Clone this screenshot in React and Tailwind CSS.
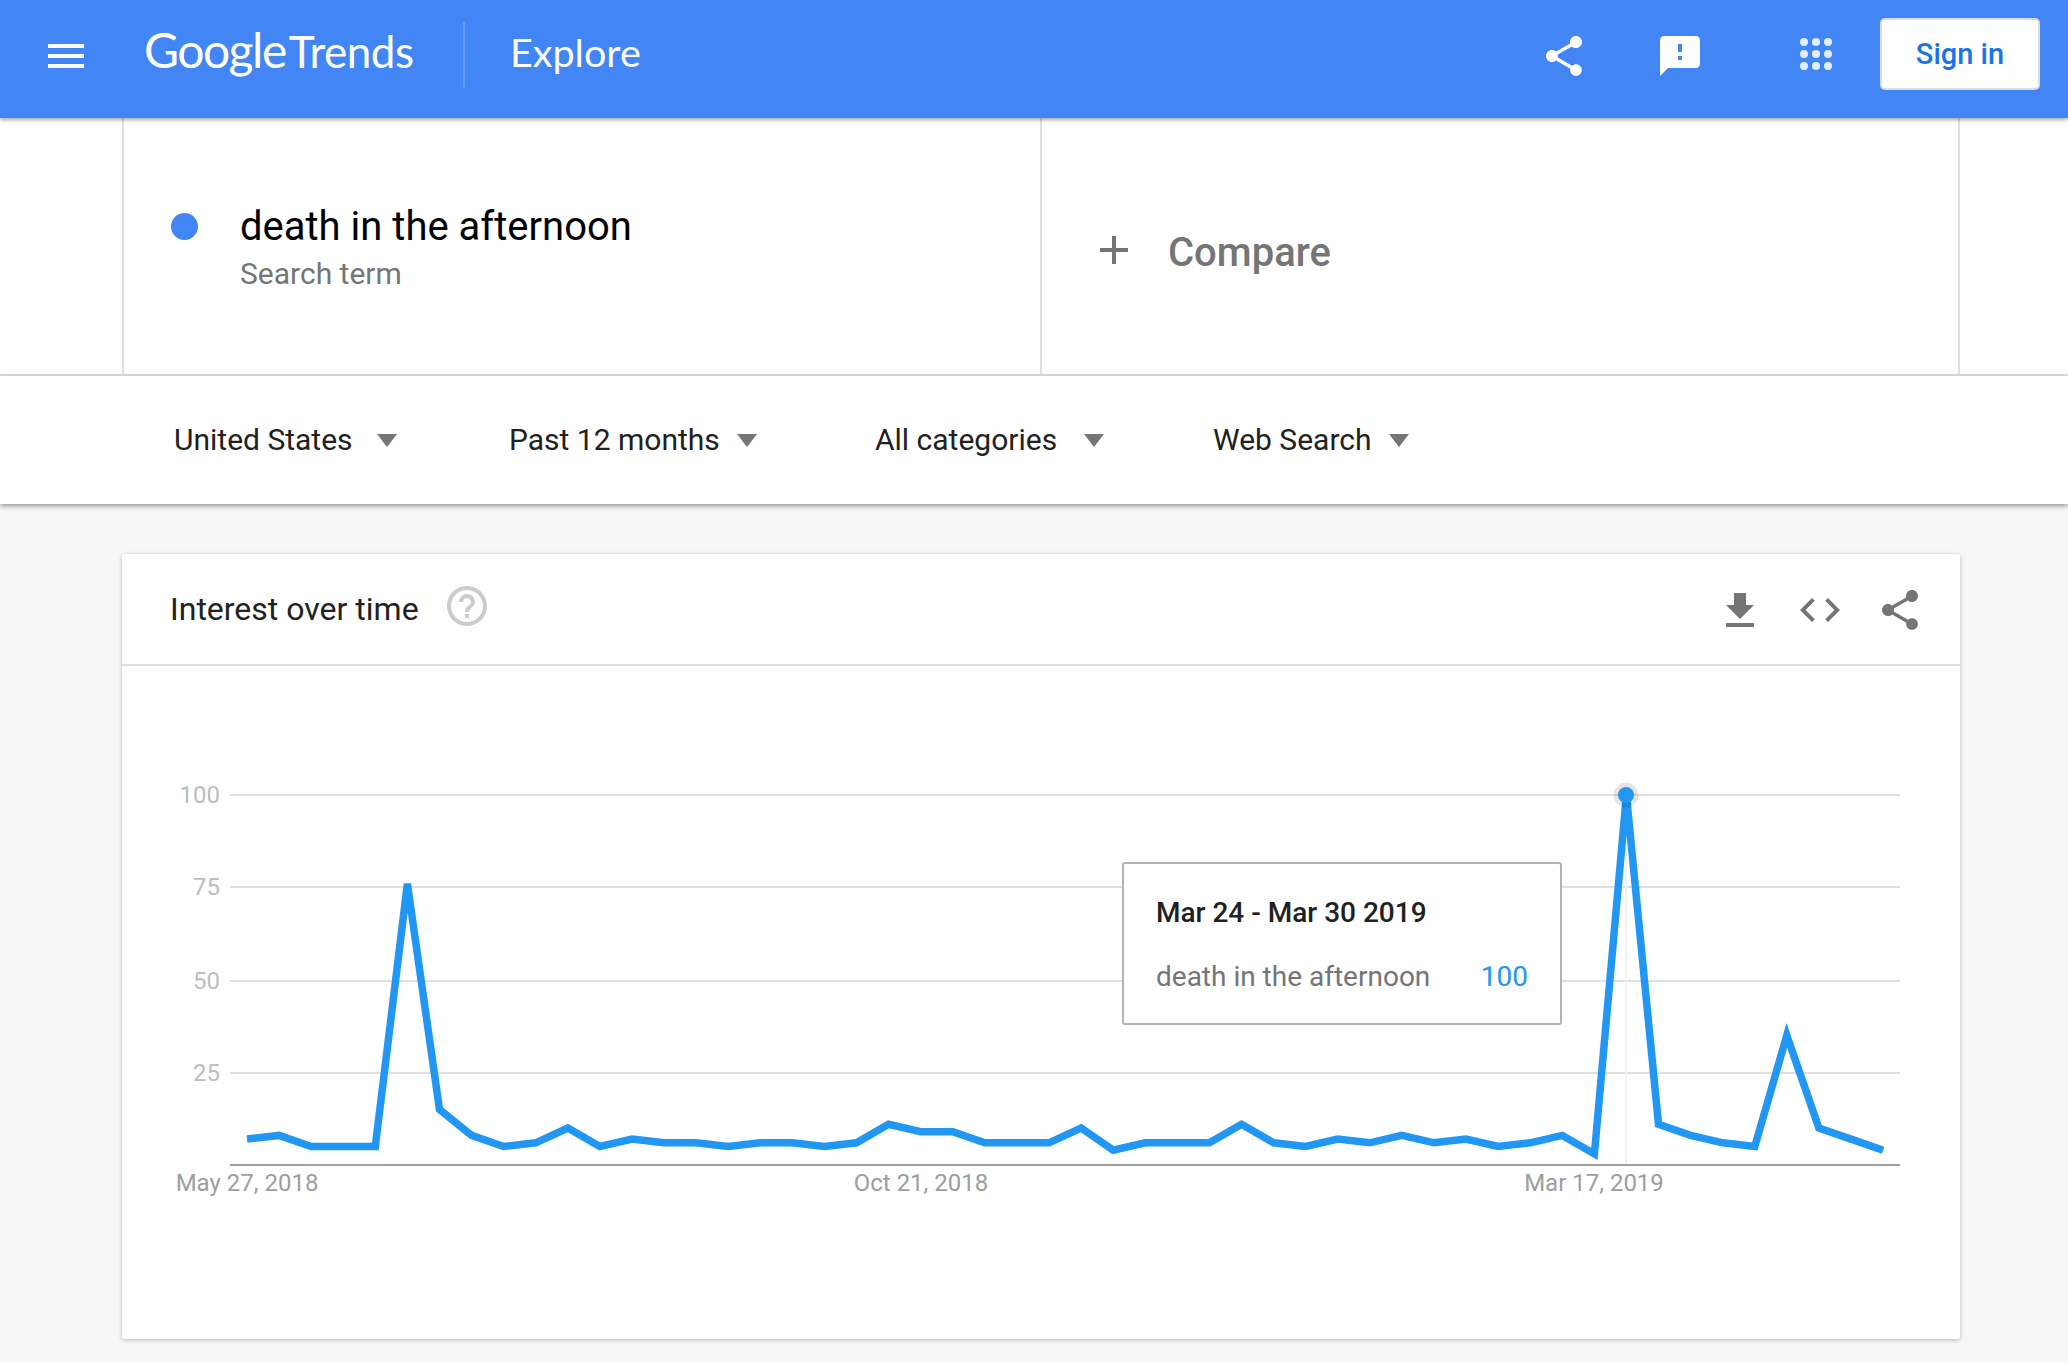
const values = [7, 8, 5, 5, 5, 76, 15, 8, 5, 6, 10, 5, 7, 6, 6, 5, 6, 6, 5, 6, 11, 9, 9, 6, 6, 6, 10, 4, 6, 6, 6, 11, 6, 5, 7, 6, 8, 6, 7, 5, 6, 8, 3, 100, 11, 8, 6, 5, 35, 10, 7, 4];
const points = values.map((v, i) => `${(247 + i * 32.08).toFixed(1)},${(1165 - v * 3.7).toFixed(1)}`).join(' ');

const filters = [
  { label: 'United States', box: 'w-[335px] gap-[24px]' },
  { label: 'Past 12 months', box: 'w-[366px] gap-[17px]' },
  { label: 'All categories', box: 'w-[338px] gap-[27px]' },
  { label: 'Web Search', box: 'gap-[17px]' },
];

const gridLines = [
  { y: 795, label: '100' },
  { y: 887, label: '75' },
  { y: 981, label: '50' },
  { y: 1073, label: '25' },
];

const dates = [
  { x: 247, label: 'May 27, 2018' },
  { x: 921, label: 'Oct 21, 2018' },
  { x: 1594, label: 'Mar 17, 2019' },
];

function Icon({ d, className }) {
  return (
    <svg viewBox="0 0 24 24" className={className} fill="currentColor">
      <path d={d} />
    </svg>
  );
}

const sharePath = 'M18 16.08c-.76 0-1.44.3-1.96.77L8.91 12.7c.05-.23.09-.46.09-.7s-.04-.47-.09-.7l7.05-4.11c.54.5 1.25.81 2.04.81 1.66 0 3-1.34 3-3s-1.34-3-3-3-3 1.34-3 3c0 .24.04.47.09.7L8.04 9.81C7.5 9.31 6.79 9 6 9c-1.66 0-3 1.34-3 3s1.34 3 3 3c.79 0 1.5-.31 2.04-.81l7.12 4.16c-.05.21-.08.43-.08.65 0 1.61 1.31 2.92 2.92 2.92 1.61 0 2.92-1.31 2.92-2.92s-1.31-2.92-2.92-2.92z';
const feedbackPath = 'M20 2H4c-1.1 0-1.99.9-1.99 2L2 22l4-4h14c1.1 0 2-.9 2-2V4c0-1.1-.9-2-2-2zm-7 12h-2v-2h2v2zm0-4h-2V6h2v4z';
const downloadPath = 'M19 9h-4V3H9v6H5l7 7 7-7zM5 18v2h14v-2H5z';
const codePath = 'M9.4 16.6L4.8 12l4.6-4.6L8 6l-6 6 6 6 1.4-1.4zm5.2 0l4.6-4.6-4.6-4.6L16 6l6 6-6 6-1.4-1.4z';
const helpPath = 'M11 18h2v-2h-2v2zm1-16C6.48 2 2 6.48 2 12s4.48 10 10 10 10-4.48 10-10S17.52 2 12 2zm0 18c-4.41 0-8-3.59-8-8s3.59-8 8-8 8 3.59 8 8-3.59 8-8 8zm0-14c-2.21 0-4 1.79-4 4h2c0-1.1.9-2 2-2s2 .9 2 2c0 2-3 1.75-3 5h2c0-2.25 3-2.5 3-5 0-2.21-1.79-4-4-4z';

function Header() {
  return (
    <header className="relative z-20 flex h-[118px] items-start bg-[#4285f4] text-white shadow-[0_2px_4px_rgba(0,0,0,0.35)]">
      <div className="ml-[48px] mt-[44px] flex w-[36px] flex-col gap-[6px]">
        <div className="h-[4px] bg-white" />
        <div className="h-[4px] bg-white" />
        <div className="h-[4px] bg-white" />
      </div>
      <div className="ml-[60px] mt-[24px] flex w-[269px] items-baseline whitespace-nowrap font-[Lato,sans-serif] leading-[52px]">
        <span className="text-[48px] font-normal tracking-[-1.5px]">Google</span>
        <span className="ml-[3px] text-[44px] font-normal tracking-[-0.5px]">Trends</span>
      </div>
      <div className="ml-[50px] mt-[22px] h-[66px] w-[2px] bg-white/20" />
      <span className="ml-[45px] mt-[29px] font-[Lato,sans-serif] text-[39.5px] font-normal leading-[46px]">Explore</span>
      <Icon d={sharePath} className="ml-auto mt-[32px] h-[48px] w-[48px]" />
      <Icon d={feedbackPath} className="ml-[68px] mt-[32px] h-[48px] w-[48px]" />
      <svg viewBox="0 0 32 32" className="ml-[96px] mt-[38px] h-[32px] w-[32px]" fill="#ffffff" fillOpacity="0.85">
        {[4, 16, 28].map((cy) =>
          [4, 16, 28].map((cx) => <circle key={`${cx}-${cy}`} cx={cx} cy={cy} r="4" />)
        )}
      </svg>
      <button className="ml-[48px] mr-[28px] mt-[18px] h-[72px] w-[160px] rounded-[5px] border-2 border-[#dadce0] bg-white pt-[2px] text-[29px] font-medium text-[#1a73e8]">
        Sign in
      </button>
    </header>
  );
}

function SearchTerms() {
  return (
    <section className="h-[258px] border-b-2 border-[#e0e0e0] bg-white">
      <div className="ml-[122px] flex h-full w-[1838px] border-x-2 border-[#e0e0e0]">
        <div className="flex w-[918px] items-start border-r-2 border-[#e0e0e0] pl-[47px]">
          <div className="mt-[95px] h-[27px] w-[27px] rounded-full bg-[#4285f4]" />
          <div className="ml-[42px] mt-[87px]">
            <p className="text-[40px] leading-[44px] text-black">death in the afternoon</p>
            <p className="mt-[8px] text-[30px] leading-[34px] text-[#757575]">Search term</p>
          </div>
        </div>
        <div className="flex flex-1 items-start pl-[58px]">
          <svg viewBox="0 0 28 28" className="mt-[118px] h-[28px] w-[28px]" fill="#757575">
            <rect x="12" y="0" width="4" height="28" />
            <rect x="0" y="12" width="28" height="4" />
          </svg>
          <span className="ml-[40px] mt-[113px] text-[40px] font-medium leading-[44px] text-[#757575]">Compare</span>
        </div>
      </div>
    </section>
  );
}

function Filters() {
  return (
    <section className="relative z-10 flex h-[128px] items-start bg-white pl-[174px] pt-[47px] shadow-[0_2px_5px_rgba(0,0,0,0.4)]">
      {filters.map((f) => (
        <div key={f.label} className={`flex items-center ${f.box}`}>
          <span className="text-[30px] leading-[34px] text-[#212121]">{f.label}</span>
          <svg viewBox="0 0 20 13" className="h-[13px] w-[20px]" fill="#757575">
            <polygon points="0,0 20,0 10,13" />
          </svg>
        </div>
      ))}
    </section>
  );
}

function Chart() {
  return (
    <div className="relative">
      <svg viewBox="122 666 1838 673" className="block h-[673px] w-[1838px]" fontFamily="Roboto, sans-serif" fontSize="24">
        {gridLines.map((g) => (
          <g key={g.y}>
            <line x1="230" x2="1900" y1={g.y} y2={g.y} stroke="#e0e0e0" strokeWidth="2" />
            <text x="220" y={g.y + 8} textAnchor="end" fill="#bdbdbd">{g.label}</text>
          </g>
        ))}
        <line x1="1626" x2="1626" y1="795" y2="1165" stroke="#f2f2f2" strokeWidth="2" />
        <line x1="230" x2="1900" y1="1165" y2="1165" stroke="#9e9e9e" strokeWidth="2" />
        {dates.map((d) => (
          <text key={d.label} x={d.x} y="1191" textAnchor="middle" fill="#9e9e9e">{d.label}</text>
        ))}
        <polyline points={points} fill="none" stroke="#2196f3" strokeWidth="7.5" />
        <circle cx="1626" cy="795" r="12.5" fill="#000000" fillOpacity="0.1" />
        <circle cx="1626" cy="795" r="8" fill="#2196f3" />
      </svg>
      <div className="absolute left-[1000px] top-[196px] h-[163px] w-[440px] rounded-[3px] border-2 border-[#b3b3b3] bg-white pl-[32px] pr-[32px] pt-[34px]">
        <p className="text-[28px] font-medium leading-[30px] text-[#212121]">Mar 24 - Mar 30 2019</p>
        <div className="mt-[33px] flex justify-between text-[28px] leading-[31px]">
          <span className="text-[#757575]">death in the afternoon</span>
          <span className="text-[#2196f3]">100</span>
        </div>
      </div>
    </div>
  );
}

function InterestCard() {
  return (
    <section className="ml-[122px] mt-[50px] h-[785px] w-[1838px] rounded-[2px] bg-white shadow-[0_1px_4px_rgba(0,0,0,0.25)]">
      <div className="flex h-[112px] items-start border-b-2 border-[#e0e0e0] text-[#757575]">
        <h2 className="ml-[48px] mt-[37px] text-[32px] font-normal leading-[37px] text-[#212121]">Interest over time</h2>
        <svg viewBox="2 2 20 20" className="ml-[28px] mt-[32px] h-[40px] w-[40px]" fill="#cccccc">
          <path d={helpPath} />
        </svg>
        <Icon d={downloadPath} className="ml-auto mt-[33px] h-[48px] w-[48px]" />
        <Icon d={codePath} className="ml-[32px] mt-[32px] h-[48px] w-[48px]" />
        <Icon d={sharePath} className="ml-[32px] mr-[36px] mt-[32px] h-[48px] w-[48px]" />
      </div>
      <Chart />
    </section>
  );
}

export default function App() {
  return (
    <div className="h-[1362px] overflow-hidden bg-[#f7f7f7] font-[Roboto,sans-serif]">
      <Header />
      <SearchTerms />
      <Filters />
      <InterestCard />
    </div>
  );
}
